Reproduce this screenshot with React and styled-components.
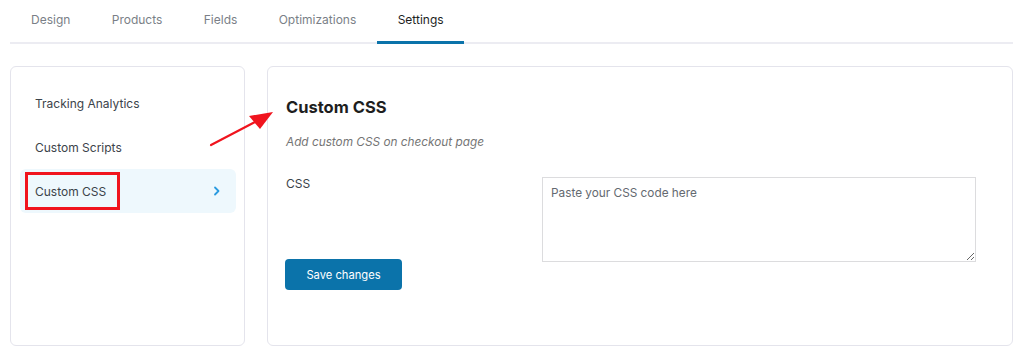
import React from "react";
import styled, { createGlobalStyle } from "styled-components";

const Global = createGlobalStyle`
  html, body { margin: 0; padding: 0; background: #fff; }
  body { font-family: Inter, "Noto Sans", "Liberation Sans", sans-serif; color: #3c434a; }
`;

const Page = styled.div`
  position: relative;
  width: 1024px;
  height: 357px;
  padding: 0 11px 0 10px;
  box-sizing: border-box;
`;

const TabBar = styled.nav`
  display: flex;
  height: 44px;
  border-bottom: 2px solid #ececf2;
  box-sizing: border-box;
`;

const Tab = styled.div`
  display: flex;
  align-items: center;
  padding: 0 20.7px 2px;
  font-size: 12px;
  color: ${(p) => (p.$active ? "#1e1e1e" : "#7a7f87")};
  border-bottom: 3px solid ${(p) => (p.$active ? "#0b73aa" : "transparent")};
  margin-bottom: -2px;
  &:first-child { padding-left: 21px; }
`;

const Columns = styled.div`
  display: flex;
  gap: 22px;
  margin-top: 22px;
  height: 280px;
`;

const Card = styled.section`
  border: 1px solid #e4e4ec;
  border-radius: 6px;
  box-sizing: border-box;
  background: #fff;
`;

const Sidebar = styled(Card)`
  width: 235px;
  flex: none;
  padding: 14px 8px 0 9px;
  display: flex;
  flex-direction: column;
`;

const NavItem = styled.div`
  position: relative;
  display: flex;
  align-items: center;
  justify-content: space-between;
  height: 44px;
  padding: 0 15px;
  border-radius: 6px;
  font-size: 12px;
  color: #3c434a;
  background: ${(p) => (p.$active ? "#eef8fd" : "transparent")};
`;

const Highlight = styled.span`
  position: absolute;
  left: 5px;
  top: 3px;
  width: 95px;
  height: 38px;
  border: 3px solid #f0141e;
  box-sizing: border-box;
`;

const Main = styled(Card)`
  flex: 1;
  padding: 25px 36px 0 18px;
`;

const Title = styled.h2`
  margin: 0;
  font-size: 16.5px;
  font-weight: 700;
  color: #1e1e1e;
  line-height: 30px;
`;

const Subtitle = styled.p`
  margin: 10px 0 0;
  font-size: 11.8px;
  font-style: italic;
  color: #757575;
  line-height: 20px;
`;

const FieldRow = styled.div`
  display: grid;
  grid-template-columns: 256px 1fr;
  margin-top: 25px;
`;

const Label = styled.label`
  font-size: 12px;
  color: #3c434a;
  line-height: 14px;
`;

const TextArea = styled.textarea`
  height: 85px;
  box-sizing: border-box;
  border: 1px solid #dcdcde;
  border-radius: 0;
  padding: 8px 8px;
  font-family: inherit;
  font-size: 11.8px;
  color: #3c434a;
  resize: vertical;
  &::placeholder { color: #646970; }
`;

const SaveButton = styled.button`
  display: block;
  margin: -3px 0 0 -1px;
  width: 117px;
  height: 31px;
  border: none;
  border-radius: 4px;
  background: #0b73aa;
  color: #fff;
  font-family: inherit;
  font-size: 11.2px;
`;

const Arrow = styled.svg`
  position: absolute;
  left: 205px;
  top: 105px;
`;

const Chevron = () => (
  <svg width="8" height="10" viewBox="0 0 8 10">
    <path d="M2 1.5 L5.5 5 L2 8.5" fill="none" stroke="#2a9be0" strokeWidth="1.8" strokeLinecap="round" strokeLinejoin="round" />
  </svg>
);

export default function App() {
  return (
    <Page>
      <Global />
      <TabBar>
        <Tab>Design</Tab>
        <Tab>Products</Tab>
        <Tab>Fields</Tab>
        <Tab>Optimizations</Tab>
        <Tab $active>Settings</Tab>
      </TabBar>
      <Columns>
        <Sidebar>
          <NavItem>Tracking Analytics</NavItem>
          <NavItem>Custom Scripts</NavItem>
          <NavItem $active>
            Custom CSS
            <Chevron />
            <Highlight />
          </NavItem>
        </Sidebar>
        <Main>
          <Title>Custom CSS</Title>
          <Subtitle>Add custom CSS on checkout page</Subtitle>
          <FieldRow>
            <Label>CSS</Label>
            <TextArea placeholder="Paste your CSS code here" />
          </FieldRow>
          <SaveButton>Save changes</SaveButton>
        </Main>
      </Columns>
      <Arrow width="72" height="46" viewBox="0 0 72 46">
        <path d="M6 40 L50 17" stroke="#f0141e" strokeWidth="2.2" strokeLinecap="round" />
        <polygon points="68,7 44,11 55,24" fill="#f0141e" />
      </Arrow>
    </Page>
  );
}
